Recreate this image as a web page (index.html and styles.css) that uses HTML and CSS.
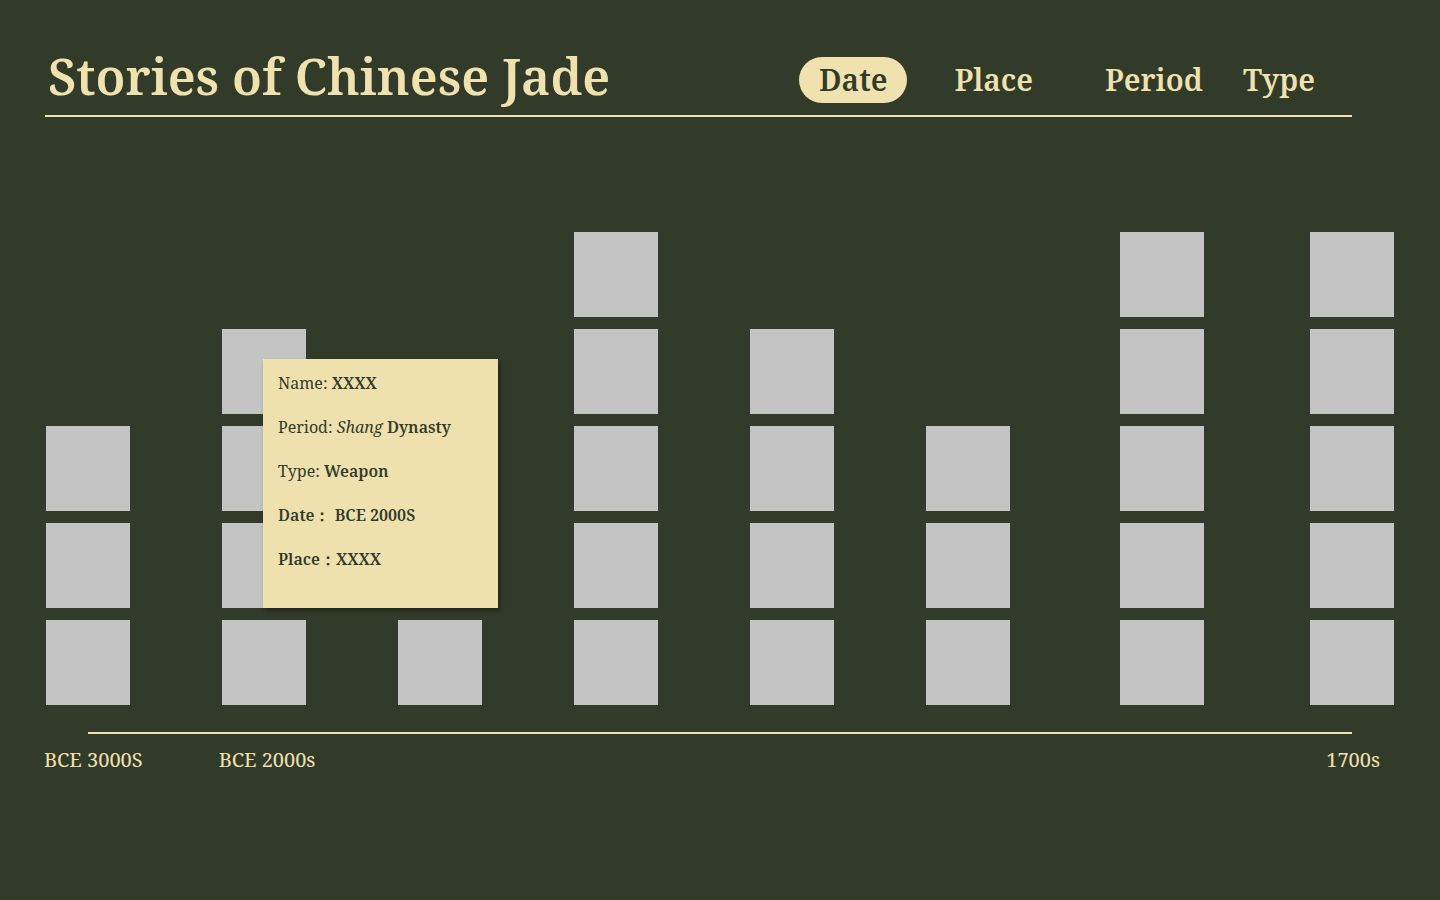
FILE: index.html
```html
<!DOCTYPE html>
<html lang="en">

<head>
  <meta charset="UTF-8">
  <meta name="viewport" content="width=device-width, initial-scale=1.0">
  <title>Stories of Chinese Jade</title>
  <link rel="stylesheet" href="styles.css">
</head>

<body>
  <div class="header">
    <h1 class="title">Stories of Chinese Jade</h1>
    <div class="nav">
      <span class="nav-item active">Date</span>
      <span class="nav-item place">Place</span>
      <span class="nav-item period">Period</span>
      <span class="nav-item type">Type</span>
    </div>
  </div>

  <div class="chart">
    <!-- each column is one century, each square one jade piece -->
    <div class="column">
      <div class="piece"></div><div class="piece"></div><div class="piece"></div>
    </div>
    <div class="column">
      <div class="piece"></div><div class="piece"></div><div class="piece"></div><div class="piece"></div>
    </div>
    <div class="column">
      <div class="piece"></div>
    </div>
    <div class="column">
      <div class="piece"></div><div class="piece"></div><div class="piece"></div><div class="piece"></div><div class="piece"></div>
    </div>
    <div class="column">
      <div class="piece"></div><div class="piece"></div><div class="piece"></div><div class="piece"></div>
    </div>
    <div class="column">
      <div class="piece"></div><div class="piece"></div><div class="piece"></div>
    </div>
    <div class="column col-7">
      <div class="piece"></div><div class="piece"></div><div class="piece"></div><div class="piece"></div><div class="piece"></div>
    </div>
    <div class="column col-8">
      <div class="piece"></div><div class="piece"></div><div class="piece"></div><div class="piece"></div><div class="piece"></div>
    </div>

    <div class="tooltip">
      <p>Name: <b>XXXX</b></p>
      <p>Period: <i>Shang</i> <b>Dynasty</b></p>
      <p>Type: <b>Weapon</b></p>
      <p><b>Date：&nbsp;BCE 2000S</b></p>
      <p><b>Place：XXXX</b></p>
    </div>
  </div>

  <div class="timeline"></div>
  <div class="labels">
    <span class="label">BCE 3000S</span>
    <span class="label second">BCE 2000s</span>
    <span class="label last">1700s</span>
  </div>
</body>

</html>
```

FILE: styles.css
```css
body {
  margin: 0;
  height: 100vh;
  background-color: #323b2a;
  color: #f0e2ae;
  font-family: "Noto Serif", "DejaVu Serif", serif;
}

.header {
  display: flex;
  justify-content: space-between;
  align-items: center;
  width: 1307px;
  margin-left: 45px;
  padding-top: 44px;
  padding-bottom: 6px;
  border-bottom: 2px solid #f0e2ae;
}

.title {
  margin: 0 0 0 3px;
  font-size: 50px;
  font-weight: 600;
  line-height: 65px;
}

.nav {
  display: flex;
  align-items: center;
  margin-right: 17px;
  margin-top: 6px;
}

.nav-item {
  font-size: 30px;
  font-weight: 600;
  line-height: 46px;
  padding: 0 20px;
  border-radius: 23px;
}

.nav-item.active {
  background-color: #f0e2ae;
  color: #323b2a;
}

.nav-item.place {
  margin-left: 27px;
}

.nav-item.period {
  margin-left: 32px;
}

/* Chart */
.chart {
  position: relative;
  display: flex;
  align-items: flex-end;
  gap: 92px;
  height: 588px;
  margin-left: 46px;
}

.column {
  display: flex;
  flex-direction: column;
  gap: 12px;
}

.column.col-7 {
  margin-left: 18px;
}

.column.col-8 {
  margin-left: 14px;
}

.piece {
  width: 84px;
  height: 85px;
  background-color: #c4c4c4;
}

.tooltip {
  position: absolute;
  left: 217px;
  top: 242px;
  width: 235px;
  height: 249px;
  box-sizing: border-box;
  padding: 2px 15px;
  background-color: #efe1ae;
  color: #323b2a;
  font-size: 16px;
  box-shadow: 2px 3px 5px rgba(0, 0, 0, 0.35);
}

.tooltip p {
  margin: 0;
  line-height: 44px;
}

.tooltip b {
  font-weight: 600;
}

/* Timeline */
.timeline {
  width: 1264px;
  margin-left: 88px;
  margin-top: 27px;
  border-top: 2px solid #f0e2ae;
}

.labels {
  display: flex;
  margin-top: 12px;
  font-size: 20px;
}

.label {
  margin-left: 44px;
}

.label.second {
  margin-left: 76px;
}

.label.last {
  margin-left: auto;
  margin-right: 60px;
}
```
